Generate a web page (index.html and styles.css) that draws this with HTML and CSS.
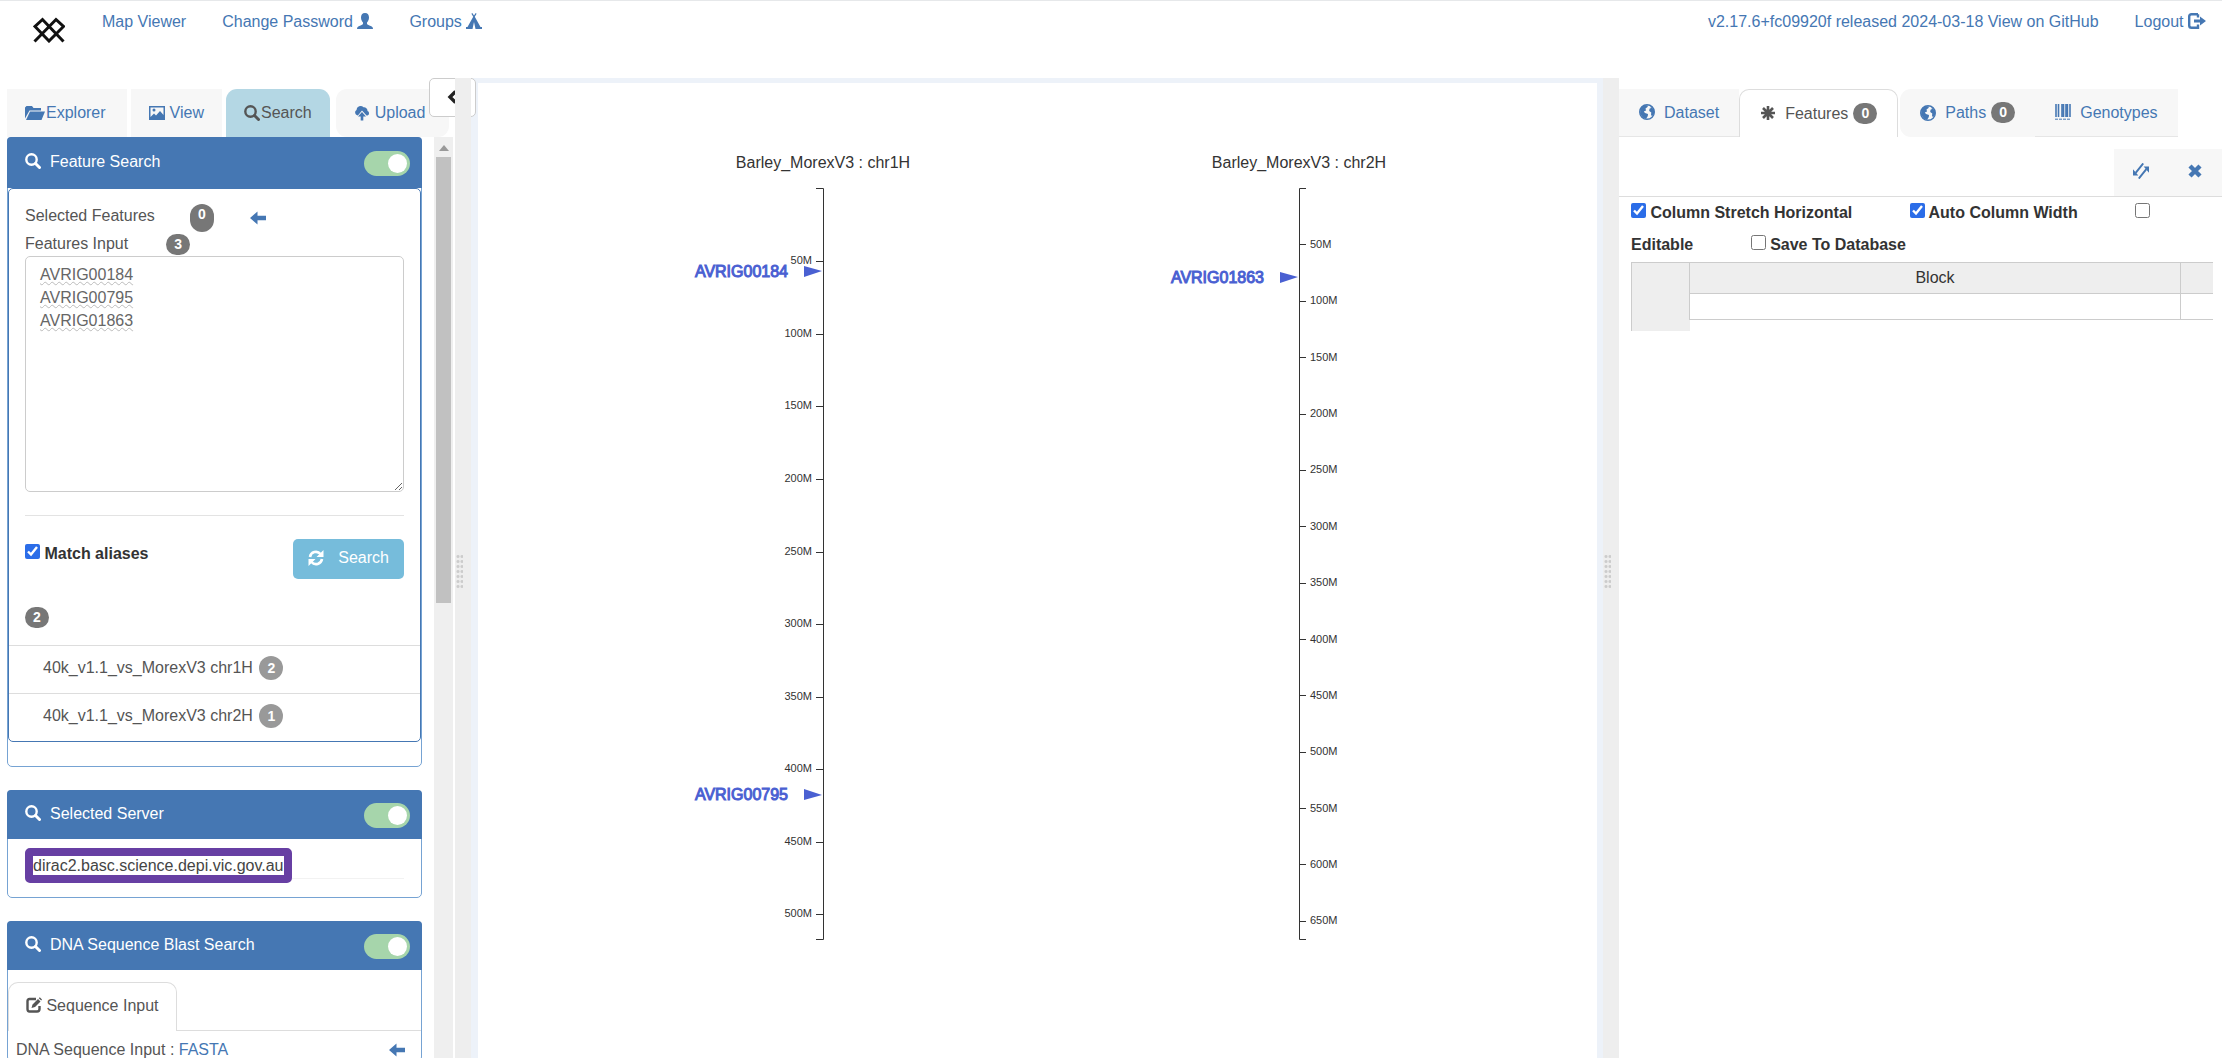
FILE: index.html
```html
<!DOCTYPE html>
<html lang="en">
<head>
<meta charset="utf-8">
<meta name="viewport" content="width=device-width, initial-scale=1">
<title>Map Viewer</title>
<link rel="stylesheet" href="styles.css">
</head>
<body>
<svg class="defs" aria-hidden="true">
  <symbol id="i-search" viewBox="0 0 16 16"><circle cx="6.5" cy="6.5" r="5.200" fill="none" stroke="currentColor" stroke-width="2.400"/><path d="M10.500 10.500l4 4" stroke="currentColor" stroke-width="3" stroke-linecap="round"/></symbol>
  <symbol id="i-left" viewBox="0 0 16 14"><path d="M0 7L7.5 0.500V4.800H16V9.200H7.500V13.500z" fill="currentColor"/></symbol>
  <symbol id="i-globe" viewBox="0 0 16 16"><circle cx="8" cy="8" r="7.300" fill="none" stroke="currentColor" stroke-width="1.400"/><path d="M1.500 4L5.500 1 9 1.500 8.500 3 6.500 4.500 7 6.500 4.800 7.500 6 9 9 10 8.800 12 7 15 4 13.800 1 10zM11 1.800L15 5.500 15.200 9.500 13 12.500 12 10.500 12.300 8.500 10.200 7 10.500 4.800 12 4z" fill="currentColor"/></symbol>
</svg>

<header class="topbar">
  <svg class="logo" viewBox="0 0 32 26" role="img" aria-label="Logo"><path d="M1.500 24.500L23 2.500 30.500 9.500 16 24 2 9.500 9.500 2.500 30.500 24.500" fill="none" stroke="#111" stroke-width="3"/></svg>
  <nav class="links">
    <a href="#">Map Viewer</a>
    <a href="#">Change Password <svg class="ico" viewBox="0 0 16 16"><path d="M8 0c2.800 0 4 2 4 4.500S10.800 8.500 10 9.500c-.3 2 .5 2.300 3 3.200 2 .7 3 1.300 3 3.300H0c0-2 1-2.600 3-3.300 2.500-.9 3.300-1.200 3-3.200C5.200 8.500 4 7 4 4.500S5.200 0 8 0z" fill="currentColor"/></svg></a>
    <a href="#">Groups <svg class="ico" viewBox="0 0 16 16"><path d="M6.300 0L8 2.600 9.700 0l.9.700L8.800 3.800 14.500 14H16v2H9.500L8 9l-1.500 7H0v-2h1.500L7.200 3.800 5.400.7z" fill="currentColor"/></svg></a>
  </nav>
  <nav class="links links-right">
    <a href="#">v2.17.6+fc09920f released 2024-03-18 View on GitHub</a>
    <a href="#">Logout <svg class="ico ico-18" viewBox="0 0 18 16"><path d="M10 1.200H3.500Q1.200 1.200 1.200 3.500V12.500Q1.200 14.800 3.500 14.800H10V11.500M10 1.200V4.500" fill="none" stroke="currentColor" stroke-width="2.400"/><path d="M6 6.500h6V3.500L18 8l-6 4.500V9.500H6z" fill="currentColor"/></svg></a>
  </nav>
</header>

<main class="workspace">
  <aside class="left">
    <nav class="tabs left-tabs">
      <a class="tab" href="#"><svg class="ico ico-20" viewBox="0 0 20 16"><path d="M0 13.500V2.500L1.500 1H7L8.500 3H16V5.500H4.500z" fill="currentColor"/><path d="M5 6.500H20L16.500 15H1z" fill="currentColor"/></svg>Explorer</a>
      <a class="tab" href="#"><svg class="ico" viewBox="0 0 16 16"><path d="M0 1H16V15H0zM1.500 2.500V12L5 8.500 7 10.500 11 6 14.500 10V2.500z" fill="currentColor" fill-rule="evenodd"/><circle cx="5" cy="5" r="1.500" fill="currentColor"/></svg> View</a>
      <a class="tab tab-on" href="#"><svg class="ico"><use href="#i-search"/></svg>Search</a>
      <a class="tab" href="#"><svg class="ico" viewBox="0 0 16 16"><path d="M3.500 10.500A3 3 0 0 1 2.500 5 4 4 0 0 1 9.500 2.300 3.500 3.500 0 0 1 13.500 6 2.400 2.400 0 0 1 13.500 10.500H12.500L8 5.500 4.300 10z" fill="currentColor"/><path d="M8 7L12 11.500H9.300V15.500H6.700V11.500H4z" fill="currentColor"/></svg> Upload</a>
    </nav>
    <button class="collapse" type="button" aria-label="Collapse panel"><svg class="chev" viewBox="0 0 10 14"><path d="M8.500 1.500L3 7l5.500 5.500" fill="none" stroke="currentColor" stroke-width="3.400"/></svg></button>
    <div class="scroller">
      <div class="panels">
        <section class="panel panel-tail">
          <h2 class="panel-head"><svg class="ico"><use href="#i-search"/></svg>Feature Search<input class="toggle" type="checkbox" checked aria-label="Show Feature Search"></h2>
          <div class="panel-body">
            <div class="form">
              <div class="count-row"><span>Selected Features</span><span class="badge badge-tall">0</span><button class="plain" type="button" aria-label="Use selected features"><svg class="ico arrow"><use href="#i-left"/></svg></button></div>
              <div class="count-row"><label for="features">Features Input</label><span class="badge">3</span></div>
              <textarea id="features" class="features">AVRIG00184
AVRIG00795
AVRIG01863</textarea>
              <hr>
              <div class="search-row">
                <label class="check"><input type="checkbox" checked> Match aliases</label>
                <button class="search-btn" type="button"><svg class="ico" viewBox="0 0 16 16"><path d="M2 7A6 6 0 0 1 12.500 4M14 9A6 6 0 0 1 3.500 12" fill="none" stroke="currentColor" stroke-width="2.600"/><path d="M15.500 0V7H8.500zM.5 16V9H7.500z" fill="currentColor"/></svg>Search</button>
              </div>
              <span class="badge">2</span>
            </div>
            <ul class="results">
              <li>40k_v1.1_vs_MorexV3 chr1H <span class="badge badge-pale">2</span></li>
              <li>40k_v1.1_vs_MorexV3 chr2H <span class="badge badge-pale">1</span></li>
            </ul>
          </div>
        </section>
        <section class="panel">
          <h2 class="panel-head"><svg class="ico"><use href="#i-search"/></svg>Selected Server<input class="toggle" type="checkbox" checked aria-label="Show Selected Server"></h2>
          <div class="server"><span class="server-name">dirac2.basc.science.depi.vic.gov.au</span><span class="server-line"></span></div>
        </section>
        <section class="panel">
          <h2 class="panel-head"><svg class="ico"><use href="#i-search"/></svg>DNA Sequence Blast Search<input class="toggle" type="checkbox" checked aria-label="Show DNA Sequence Blast Search"></h2>
          <div class="subtabs"><a class="subtab" href="#"><svg class="ico" viewBox="0 0 16 16"><path d="M10 2H3.500Q1.500 2 1.500 4V12Q1.500 14.500 3.500 14.500H11Q13.500 14.500 13.500 12V9" fill="none" stroke="currentColor" stroke-width="2.400"/><path d="M5.500 11L6.500 7.500 12 2 14.500 4.500 9 10zM12.800 1.200L13.800.2 16 2.500 15.200 3.500z" fill="currentColor"/></svg> Sequence Input</a></div>
          <div class="fasta"><span>DNA Sequence Input : <a href="#">FASTA</a></span><button class="plain" type="button" aria-label="Use selected sequence"><svg class="ico arrow"><use href="#i-left"/></svg></button></div>
        </section>
      </div>
      <div class="scrollbar" aria-hidden="true"><span class="scroll-up"></span><span class="scroll-thumb"></span></div>
    </div>
  </aside>

  <div class="gutter"><span class="grip"></span></div>

  <section class="map">
    <svg class="chart" viewBox="0 0 1119 970" preserveAspectRatio="xMidYMin meet">
      <g transform="translate(345 105)">
        <text class="title" x="0" y="-20">Barley_MorexV3 : chr1H</text>
        <path class="axis" d="M-7 .5H.5V751.500H-7M-7 73.500H0M-7 146.500H0M-7 218.500H0M-7 291.500H0M-7 364.500H0M-7 436.500H0M-7 509.500H0M-7 581.500H0M-7 654.500H0M-7 726.500H0"/>
        <g class="ticks ticks-left">
          <text x="-11" y="76">50M</text><text x="-11" y="149">100M</text><text x="-11" y="221">150M</text><text x="-11" y="294">200M</text><text x="-11" y="367">250M</text><text x="-11" y="439">300M</text><text x="-11" y="512">350M</text><text x="-11" y="584">400M</text><text x="-11" y="657">450M</text><text x="-11" y="729">500M</text>
        </g>
        <text class="feature" x="-35" y="89">AVRIG00184</text><path class="pointer" d="M-19 78L-1 83-19 89z"/>
        <text class="feature" x="-35" y="612">AVRIG00795</text><path class="pointer" d="M-19 601L-1 607-19 612z"/>
      </g>
      <g transform="translate(821 105)">
        <text class="title" x="0" y="-20">Barley_MorexV3 : chr2H</text>
        <path class="axis" d="M7 .5H.5V751.500H7M7 56.500H0M7 113.500H0M7 169.500H0M7 226.500H0M7 282.500H0M7 338.500H0M7 395.500H0M7 451.500H0M7 507.500H0M7 564.500H0M7 620.500H0M7 676.500H0M7 733.500H0"/>
        <g class="ticks">
          <text x="11" y="60">50M</text><text x="11" y="116">100M</text><text x="11" y="173">150M</text><text x="11" y="229">200M</text><text x="11" y="285">250M</text><text x="11" y="342">300M</text><text x="11" y="398">350M</text><text x="11" y="455">400M</text><text x="11" y="511">450M</text><text x="11" y="567">500M</text><text x="11" y="624">550M</text><text x="11" y="680">600M</text><text x="11" y="736">650M</text>
        </g>
        <text class="feature" x="-35" y="95">AVRIG01863</text><path class="pointer" d="M-19 84L-1 89-19 95z"/>
      </g>
    </svg>
  </section>

  <div class="gutter"><span class="grip"></span></div>

  <aside class="right">
    <nav class="tabs right-tabs">
      <a class="tab" href="#"><svg class="ico"><use href="#i-globe"/></svg> Dataset</a>
      <a class="tab tab-open" href="#"><svg class="ico" viewBox="0 0 16 16"><path d="M8 1V15M1 8H15M3 3L13 13M13 3L3 13" stroke="currentColor" stroke-width="2.600"/></svg> Features <span class="badge">0</span></a>
      <a class="tab" href="#"><svg class="ico"><use href="#i-globe"/></svg> Paths <span class="badge">0</span></a>
      <a class="tab" href="#"><svg class="ico" viewBox="0 0 16 16"><path d="M1 0V13M3.500 0V13M7 0V13M11 0V13M15 0V13" stroke="currentColor" stroke-width="1.600"/><path d="M8.300 0V13M12.200 0V13" stroke="currentColor" stroke-width="2"/><path d="M0 15.200H16" stroke="currentColor" stroke-dasharray="3 1"/></svg> Genotypes</a>
    </nav>
    <div class="toolbar">
      <button type="button" aria-label="Resize"><svg class="ico ico-18" viewBox="0 0 18 18"><path d="M11.500 .5L3 11M6.500 17.500L15 7" stroke="currentColor" stroke-width="2.200"/><path d="M0 7V14H6zM18 11V4H12z" fill="currentColor"/></svg></button>
      <button type="button" aria-label="Close"><svg class="ico" viewBox="0 0 16 16"><path d="M3 3L13 13M13 3L3 13" stroke="currentColor" stroke-width="4.400"/></svg></button>
    </div>
    <div class="options">
      <label class="check"><input type="checkbox" checked> Column Stretch Horizontal</label>
      <label class="check"><input type="checkbox" checked> Auto Column Width</label>
      <label class="check"><input type="checkbox"> Editable</label>
      <label class="check"><input type="checkbox"> Save To Database</label>
    </div>
    <div class="grid">
      <table>
        <colgroup><col class="c-head"><col class="c-block"><col class="c-more"></colgroup>
        <thead><tr><th></th><th>Block</th><th></th></tr></thead>
        <tbody><tr><th></th><td></td><td></td></tr></tbody>
        <tfoot><tr><th></th></tr></tfoot>
      </table>
    </div>
  </aside>
</main>
</body>
</html>
```
FILE: styles.css
```css
* { box-sizing: border-box; }
body {
  margin: 0;
  height: 100vh;
  display: flex;
  flex-direction: column;
  overflow: hidden;
  border-top: 1px solid #e6e8ea;
  background: #fff;
  color: #555;
  font: 16px/23px "Liberation Sans", Arial, sans-serif;
}
a { color: #4577b3; text-decoration: none; }
button, textarea { font: inherit; }
.defs { position: absolute; width: 0; height: 0; }
.ico { width: 16px; height: 16px; flex: none; vertical-align: -2px; }
.ico-18 { width: 18px; }
.ico-20 { width: 20px; }

/* top navigation */
.topbar { display: flex; align-items: flex-start; flex: none; height: 77px; padding: 9px 16px 0 33px; }
.logo { width: 32px; height: 26px; margin: 7px 37px 0 0; flex: none; }
.links { display: flex; gap: 36px; white-space: nowrap; }
.links-right { margin-left: auto; }

.workspace { display: flex; flex: 1; min-height: 0; }

/* tabs */
.tabs { display: flex; flex: none; height: 48px; margin-top: 11px; }
.tab {
  display: flex;
  align-items: center;
  gap: 5px;
  padding: 0 18px 1px;
  background: #f7f7f7;
  white-space: nowrap;
}
.left-tabs { gap: 4px; }
.tab-on { gap: 1px; background: #b4d7e4; color: #555; border-radius: 11px 11px 0 0; }
.left-tabs .tab:first-child { gap: 1px; padding-right: 21px; }
.left-tabs .tab:last-child { margin-left: 2px; padding-right: 24px; border-radius: 11px; }
.right-tabs .tab { gap: 9px; padding: 0 20px 1px; }
.right-tabs .tab .badge { margin-left: -4px; }
.right-tabs .tab:nth-child(3) { margin-left: 2px; border-radius: 11px 0 0 11px; }
.right-tabs .tab:first-child, .right-tabs .tab:last-child { border-bottom: 1px solid #e6e6e6; }
.right-tabs .tab-open { background: #fff; border: 1px solid #ddd; border-bottom: 0; border-radius: 10px 10px 0 0; color: #555; }

.badge {
  display: inline-block;
  min-width: 24px;
  padding: 0 7px;
  border-radius: 12px;
  background: #777;
  color: #fff;
  font-size: 14px;
  font-weight: bold;
  line-height: 21px;
  text-align: center;
}
.badge-tall { height: 28px; }
.badge-pale { margin-left: 2px; background: #999; line-height: 24px; }

/* left side */
.left { position: relative; display: flex; flex-direction: column; flex: 0 0 455px; min-width: 0; padding-left: 7px; }
.left-tabs { overflow: hidden; }
.collapse {
  position: absolute;
  left: 429px;
  top: 0;
  width: 47px;
  height: 39px;
  padding: 0 0 0 17px;
  border: 1px solid #ccc;
  border-radius: 5px;
  background: #fff;
  color: #222;
  text-align: left;
}
.chev { width: 10px; height: 14px; vertical-align: -1px; }
.scroller { display: flex; flex: 1; min-height: 0; overflow: hidden; }
.panels { flex: 1; min-width: 0; }
.scrollbar { flex: none; width: 19px; margin: 0 2px 0 12px; background: #efefef; }
.scroll-up { display: block; height: 20px; padding-top: 8px; }
.scroll-up::before { content: ""; display: block; width: 0; margin: auto; border: solid transparent; border-width: 0 5px 6px; border-bottom-color: #999; }
.scroll-thumb { display: block; width: 15px; height: 446px; margin: auto; background: #c1c1c1; }

.panel { margin-bottom: 23px; border: 1px solid #76a3d3; border-radius: 5px; }
.panel-head {
  display: flex;
  align-items: center;
  gap: 9px;
  height: 49px;
  margin: -1px -1px 0;
  padding: 0 12px 3px 18px;
  border-radius: 4px 4px 0 0;
  background: #4577b3;
  color: #fff;
  font-size: 16px;
  font-weight: normal;
}
.panel-tail { padding-bottom: 24px; }
.panel-tail .panel-head { height: 51px; }
.toggle { appearance: none; display: flex; justify-content: flex-end; width: 46px; height: 25px; margin: 4px 0 0 auto; padding: 3px; border-radius: 13px; background: #a6d5ab; }
.toggle::before { content: ""; width: 19px; height: 19px; border-radius: 50%; background: #fff; }

.panel-body { border: 1px solid #4577b3; border-radius: 5px; }
.form { display: flow-root; padding: 15px 16px 17px; }
.count-row { display: flex; height: 28px; align-items: center; }
.count-row + .count-row { height: 24px; }
.count-row span:first-child, .count-row label { line-height: 16px; }
.count-row span:first-child { padding-bottom: 5px; }
.count-row .badge { margin-left: 38px; }
.count-row .badge-tall { margin-left: 35px; }
.plain { padding: 0; border: 0; background: none; color: #4577b3; line-height: 16px; }
.count-row .plain { margin-left: 36px; }
.arrow { height: 14px; }
.features {
  display: block;
  width: 100%;
  height: 236px;
  padding: 6px 14px;
  border: 1px solid #ccc;
  border-radius: 5px;
  background: #fff;
  color: #666;
  text-decoration: underline wavy #bbb 1px;
  outline: none;
}
hr { height: 1px; margin: 23px 0; border: 0; background: #e3e3e3; }
.check { color: #333; font-weight: bold; }
.check input { width: 15px; height: 15px; margin: 0; accent-color: #2b6de8; vertical-align: 0; }
.search-row { display: flex; justify-content: space-between; align-items: flex-start; margin-bottom: 26px; }
.search-row .check { padding-top: 3px; }
.search-btn {
  display: flex;
  align-items: center;
  gap: 14px;
  height: 40px;
  padding: 0 15px 3px;
  border: 0;
  border-radius: 5px;
  background: #76bcdb;
  color: #fff;
}
.results { margin: 0; padding: 0; list-style: none; }
.results li { height: 48px; padding: 10px 34px; border-top: 1px solid #ddd; }

.server { display: flex; height: 58px; padding: 9px 17px; }
.server-name { height: 35px; border: 8px solid #673fa3; border-radius: 5px; line-height: 19px; color: #444; }
.server-line { flex: 1; height: 31px; border-bottom: 1px solid #f2f2f2; }
.subtabs { display: flex; margin-top: 12px; border-bottom: 1px solid #ddd; }
.subtab { height: 49px; margin-bottom: -1px; padding: 11px 17px; border: 1px solid #ddd; border-bottom: 0; border-radius: 10px 10px 0 0; background: #fff; color: #555; }
.fasta { display: flex; align-items: center; justify-content: space-between; padding: 7px 16px 0 8px; }

/* dividers between panes */
.gutter { position: relative; display: flex; align-items: center; flex: 0 0 16px; background: #eee; }
.grip { width: 7px; height: 36px; margin: 8px 0 0 1px; background: radial-gradient(circle, #ccc 1px, transparent 2px) 0 0 / 4px 5px; }

/* map */
.map { flex: 1; min-width: 0; border: solid #edf2f9; border-width: 5px 6px 0 7px; }
.chart { display: block; width: 100%; }
.title { fill: #333; font-size: 16px; text-anchor: middle; }
.axis { fill: none; stroke: #333; }
.ticks { fill: #333; font-size: 11px; }
.ticks-left { text-anchor: end; }
.feature { fill: #4a60d2; stroke: #4a60d2; stroke-width: 1px; font-size: 16px; text-anchor: end; }
.pointer { fill: #4a60d2; }

/* right side */
.right { display: flex; flex-direction: column; flex: 0 0 603px; min-width: 0; }
.toolbar { display: flex; justify-content: flex-end; flex: none; height: 48px; margin-top: 12px; border-bottom: 1px solid #ddd; }
.toolbar button { width: 54px; padding: 0 0 2px; border: 0; background: #f7f7f7; color: #4577b3; }
.options { padding: 0 12px; line-height: 32px; }
.options .check { margin-right: 53px; }
.grid { overflow: hidden; margin: 1px 9px 0 12px; }
.grid table { width: 620px; table-layout: fixed; border-collapse: collapse; }
.c-head { width: 58px; }
.c-block { width: 491px; }
.grid th { height: 31px; padding: 0 0 2px; border: 1px solid #ccc; background: #eee; font-weight: normal; color: #333; }
.grid td { border: 1px solid #ccc; }
.grid tbody th { height: 26px; }
.grid tfoot th { height: 11px; }
.grid tr th:first-child { border-bottom: 0; }
.grid tbody th, .grid tfoot th { border-top: 0; }
.grid tfoot th { border-right: 0; }
```
